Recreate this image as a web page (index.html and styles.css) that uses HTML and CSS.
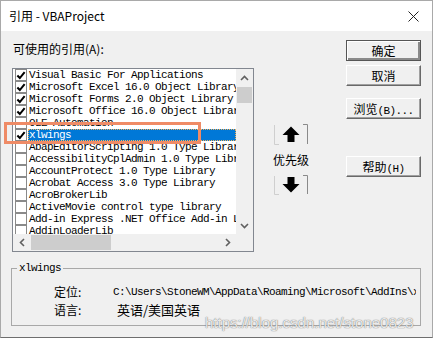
FILE: index.html
```html
<!DOCTYPE html>
<html>
<head>
<meta charset="utf-8">
<link rel="stylesheet" href="styles.css">
</head>
<body>
<div class="win">
  <div class="titlebar">
    <span class="title">引用 - VBAProject</span>
    <svg class="close" width="11" height="11" viewBox="0 0 11 11"><path d="M0.5 0.5 L10.5 10.5 M10.5 0.5 L0.5 10.5" stroke="#222" stroke-width="1" fill="none"/></svg>
  </div>
  <div class="client">
    <div class="main">
      <div class="leftcol">
        <div class="label">可使用的引用(A):</div>
        <div class="listbox">
          <div class="rows">
            <div class="row"><span class="cb on"><svg width="11" height="11" viewBox="0 0 11 11"><path d="M1.5 5.5 L4.2 8.3 L9.5 1.8" stroke="#000" stroke-width="2.2" fill="none"/></svg></span><span class="t">Visual Basic For Applications</span></div>
            <div class="row"><span class="cb on"><svg width="11" height="11" viewBox="0 0 11 11"><path d="M1.5 5.5 L4.2 8.3 L9.5 1.8" stroke="#000" stroke-width="2.2" fill="none"/></svg></span><span class="t">Microsoft Excel 16.0 Object Library</span></div>
            <div class="row"><span class="cb on"><svg width="11" height="11" viewBox="0 0 11 11"><path d="M1.5 5.5 L4.2 8.3 L9.5 1.8" stroke="#000" stroke-width="2.2" fill="none"/></svg></span><span class="t">Microsoft Forms 2.0 Object Library</span></div>
            <div class="row"><span class="cb on"><svg width="11" height="11" viewBox="0 0 11 11"><path d="M1.5 5.5 L4.2 8.3 L9.5 1.8" stroke="#000" stroke-width="2.2" fill="none"/></svg></span><span class="t">Microsoft Office 16.0 Object Library</span></div>
            <div class="row"><span class="cb"></span><span class="t">OLE Automation</span></div>
            <div class="row sel"><span class="cb on"><svg width="11" height="11" viewBox="0 0 11 11"><path d="M1.5 5.5 L4.2 8.3 L9.5 1.8" stroke="#000" stroke-width="2.2" fill="none"/></svg></span><span class="t">xlwings</span></div>
            <div class="row"><span class="cb"></span><span class="t">AbapEditorScripting 1.0 Type Library</span></div>
            <div class="row"><span class="cb"></span><span class="t">AccessibilityCplAdmin 1.0 Type Library</span></div>
            <div class="row"><span class="cb"></span><span class="t">AccountProtect 1.0 Type Library</span></div>
            <div class="row"><span class="cb"></span><span class="t">Acrobat Access 3.0 Type Library</span></div>
            <div class="row"><span class="cb"></span><span class="t">AcroBrokerLib</span></div>
            <div class="row"><span class="cb"></span><span class="t">ActiveMovie control type library</span></div>
            <div class="row"><span class="cb"></span><span class="t">Add-in Express .NET Office Add-in Loader</span></div>
            <div class="row"><span class="cb"></span><span class="t">AddinLoaderLib</span></div>
          </div>
          <div class="vscroll">
            <div class="sbtn"><svg width="9" height="6" viewBox="0 0 9 6"><path d="M1 5 L4.5 1.5 L8 5" stroke="#606060" stroke-width="1.6" fill="none"/></svg></div>
            <div class="vthumb"></div>
            <div class="track"></div>
            <div class="sbtn"><svg width="9" height="6" viewBox="0 0 9 6"><path d="M1 1 L4.5 4.5 L8 1" stroke="#606060" stroke-width="1.6" fill="none"/></svg></div>
          </div>
          <div class="hscroll">
            <div class="sbtn"><svg width="6" height="9" viewBox="0 0 6 9"><path d="M5 1 L1.5 4.5 L5 8" stroke="#606060" stroke-width="1.6" fill="none"/></svg></div>
            <div class="hthumb"></div>
            <div class="track"></div>
            <div class="sbtn"><svg width="6" height="9" viewBox="0 0 6 9"><path d="M1 1 L4.5 4.5 L1 8" stroke="#606060" stroke-width="1.6" fill="none"/></svg></div>
          </div>
          <div class="corner"></div>
        </div>
      </div>
      <div class="midcol">
        <div class="abtn up">
          <svg width="36" height="21" viewBox="0 0 36 21">
            <path d="M1.5 1 V20.5 H6" stroke="#cfcfcf" fill="none"/>
            <path d="M30 0.5 H34.5 V20" stroke="#8a8a8a" fill="none"/>
            <path d="M18 2.5 L26.5 11 H21.5 V18 H14.5 V11 H9.5 Z" fill="#000"/>
          </svg>
        </div>
        <div class="prio">优先级</div>
        <div class="abtn down">
          <svg width="36" height="20" viewBox="0 0 36 20">
            <path d="M1.5 1 V19.5 H6" stroke="#cfcfcf" fill="none"/>
            <path d="M30 0.5 H34.5 V19" stroke="#8a8a8a" fill="none"/>
            <path d="M18 17.5 L26.5 9 H21.5 V2 H14.5 V9 H9.5 Z" fill="#000"/>
          </svg>
        </div>
      </div>
      <div class="rightcol">
        <div class="btn def">确定</div>
        <div class="btn b2">取消</div>
        <div class="btn b3">浏览<span class="m">(B)...</span></div>
        <div class="btn b4">帮助<span class="m">(H)</span></div>
      </div>
    </div>
    <fieldset class="group">
      <legend class="mono">xlwings</legend>
      <div class="info">
        <span class="k">定位:</span><span class="v mono">C:\Users\StoneWM\AppData\Roaming\Microsoft\AddIns\xlwings.xlam</span>
        <span class="k">语言:</span><span class="v lang">英语/美国英语</span>
      </div>
    </fieldset>
  </div>
  <div class="annot"></div>
  <div class="watermark">https://blog.csdn.net/stone0823</div>
</div>
</body>
</html>
```

FILE: styles.css
```css
* { box-sizing: border-box; }
html, body { margin: 0; padding: 0; }
body { background: #fff; font-family: "Noto Sans CJK SC", "Liberation Sans", sans-serif; }

.win {
  position: relative;
  width: 433px;
  height: 338px;
  border: 1px solid #a9a9a9;
  border-bottom-color: #6e6e6e;
  display: flex;
  flex-direction: column;
  overflow: hidden;
}

.titlebar {
  height: 30px;
  background: #fff;
  display: flex;
  align-items: center;
  padding-left: 8px;
  padding-right: 13px;
  justify-content: space-between;
}
.title { font-size: 12px; color: #000; line-height: 14px; }
.close { display: block; margin-top: 1px; }

.client {
  flex: 1;
  background: #f0f0f0;
  display: flex;
  flex-direction: column;
}

.main {
  display: flex;
  padding-top: 9px;
  padding-left: 11px;
}

.leftcol { width: 242px; display: flex; flex-direction: column; }
.label { font-size: 12px; line-height: 14px; margin-top: 2px; color: #000; padding-left: 1px; }

.listbox {
  margin-top: 12px;
  width: 242px;
  height: 184px;
  border: 1px solid #828790;
  background: #fff;
  display: grid;
  grid-template-columns: 223px 17px;
  grid-template-rows: 165px 17px;
}

.rows { overflow: hidden; }
.row { display: flex; height: 12px; align-items: center; white-space: nowrap; }
.cb {
  flex: none;
  width: 12px;
  height: 12px;
  margin-left: 2px;
  margin-right: 1px;
  border: 1px solid #8a8a8a;
  background: #fff;
  display: flex;
  align-items: center;
  justify-content: center;
}
.cb svg { display: block; }
.t {
  font-family: "Liberation Mono", monospace;
  font-size: 11px;
  letter-spacing: -0.6px;
  line-height: 12px;
  height: 12px;
  padding-left: 1px;
  color: #000;
}
.sel .t {
  flex: 1;
  background: #0078d7;
  color: #fff;
  outline: 1px dotted #f5b25a;
  outline-offset: -1px;
}

.vscroll {
  background: #f0f0f0;
  display: flex;
  flex-direction: column;
  align-items: center;
}
.hscroll {
  background: #f0f0f0;
  display: flex;
  align-items: center;
}
.corner { background: #f0f0f0; }
.sbtn { width: 17px; height: 17px; flex: none; display: flex; align-items: center; justify-content: center; }
.sbtn svg { display: block; }
.vthumb { width: 15px; height: 16px; background: #cdcdcd; flex: none; margin-top: 1px; }
.hthumb { height: 15px; width: 80px; background: #cdcdcd; flex: none; margin-left: 1px; }
.track { flex: 1; }

.midcol {
  margin-left: 19px;
  width: 36px;
  display: flex;
  flex-direction: column;
  align-items: center;
  padding-top: 84px;
}
.abtn { width: 36px; }
.abtn svg { display: block; }
.abtn.up { height: 21px; }
.abtn.down { height: 20px; }
.prio { font-size: 12px; line-height: 14px; margin: 8px 0; color: #000; }

.rightcol {
  margin-left: 37px;
  width: 75px;
  display: flex;
  flex-direction: column;
}
.btn {
  height: 21px;
  width: 75px;
  font-size: 12px;
  line-height: 19px;
  text-align: center;
  color: #000;
  background: #f0f0f0;
  border-top: 1px solid #fff;
  border-left: 1px solid #fff;
  border-right: 1px solid #696969;
  border-bottom: 1px solid #696969;
  box-shadow: inset -1px -1px 0 #a0a0a0;
}
.btn.def {
  border: 1px solid #555;
  box-shadow: inset 1px 1px 0 #fff, inset -2px -2px 0 #8a8a8a;
}
.btn.b2 { margin-top: 4px; }
.btn.b3 { margin-top: 12px; }
.btn.b4 { margin-top: 37px; }
.m { font-family: "Liberation Mono", monospace; font-size: 11px; letter-spacing: -0.6px; }

.group {
  margin: 10px 0 0 10px;
  width: 410px;
  height: 64px;
  border: 1px solid #a8a8a8;
  padding: 9px 4px 0 42px;
  min-width: 0;
}
.group legend {
  padding: 0 2px;
  margin-left: -37px;
  line-height: 12px;
}
.mono {
  font-family: "Liberation Mono", monospace;
  font-size: 11px;
  letter-spacing: -0.6px;
  color: #000;
}
.info {
  display: grid;
  grid-template-columns: 59px 1fr;
  grid-auto-rows: 18px;
  align-items: center;
}
.k { font-size: 12px; line-height: 14px; color: #000; }
.v { white-space: nowrap; overflow: hidden; }
.lang { font-size: 13px; line-height: 16px; padding-left: 4px; color: #000; }

.annot {
  position: absolute;
  left: 3px;
  top: 121px;
  width: 197px;
  height: 22px;
  border: 3px solid #ef8b66;
}

.watermark {
  position: absolute;
  left: 204px;
  top: 313px;
  font-family: "Liberation Sans", sans-serif;
  font-size: 15px;
  line-height: 18px;
  color: rgba(255, 255, 255, 0.85);
  text-shadow: 0 0 1px rgba(100, 100, 100, 0.8), 0 0 1px rgba(100, 100, 100, 0.6);
  white-space: nowrap;
}
```
